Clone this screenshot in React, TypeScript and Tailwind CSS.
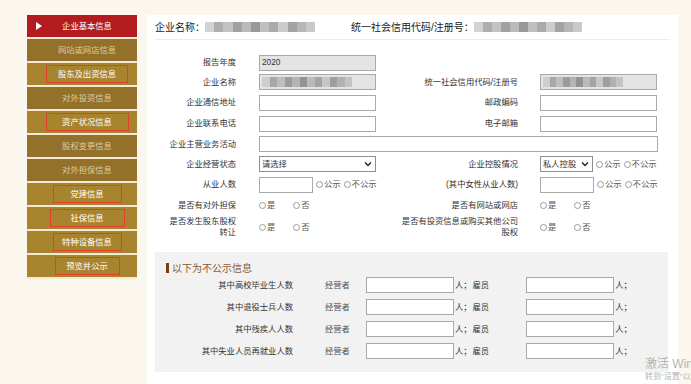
import React from "react";

const FONT = "font-['Liberation_Sans','Noto_Sans_CJK_SC',sans-serif]";

type NavItem = { label: string; kind: "red" | "dim" | "box"; boxW?: number };

const nav: NavItem[] = [
  { label: "企业基本信息", kind: "red" },
  { label: "网站或网店信息", kind: "dim" },
  { label: "股东及出资信息", kind: "box", boxW: 82 },
  { label: "对外投资信息", kind: "dim" },
  { label: "资产状况信息", kind: "box", boxW: 83 },
  { label: "股权变更信息", kind: "dim" },
  { label: "对外担保信息", kind: "dim" },
  { label: "党建信息", kind: "box", boxW: 69 },
  { label: "社保信息", kind: "box", boxW: 75 },
  { label: "特种设备信息", kind: "box", boxW: 69 },
  { label: "预览并公示", kind: "box", boxW: 65 },
];

function Sidebar() {
  return (
    <div className="w-[110px] flex flex-col shrink-0">
      {nav.map((n) => {
        const bg =
          n.kind === "red" ? "bg-[#b31c1f]" : n.kind === "dim" ? "bg-[#94712b]" : "bg-[#a9842f]";
        const txt = n.kind === "dim" ? "text-[#dccb9f]" : "text-white";
        return (
          <div
            key={n.label}
            className={`relative h-[24px] border-b-2 border-[#f3ead6] ${bg} flex items-center justify-center pl-[10px]`}
          >
            {n.kind === "red" && (
              <span className="absolute left-[9px] top-[7px] w-0 h-0 border-y-[4px] border-y-transparent border-l-[6px] border-l-white" />
            )}
            {n.kind === "box" ? (
              <span
                className={`h-[18px] flex items-center justify-center border border-[#e0402c] ${txt} text-[8.3px]`}
                style={{ width: n.boxW }}
              >
                {n.label}
              </span>
            ) : (
              <span className={`${txt} text-[8.3px]`}>{n.label}</span>
            )}
          </div>
        );
      })}
    </div>
  );
}

function Blur({ w }: { w: number }) {
  const shades = ["#c9c9c9", "#9a9a9a", "#b5b5b5", "#8a8a8a", "#a9a9a9", "#7f7f7f", "#b0b0b0", "#959595", "#c0c0c0", "#8d8d8d", "#a5a5a5", "#bcbcbc"];
  return (
    <span className="inline-flex h-[10px] overflow-hidden opacity-80" style={{ width: w }}>
      {shades.map((c, i) => (
        <span key={i} className="flex-1 h-full" style={{ background: c }} />
      ))}
    </span>
  );
}

function Radio({ label }: { label: string }) {
  return (
    <span className="inline-flex items-center">
      <span className="inline-block w-[7px] h-[7px] rounded-full border border-[#9a9a9a] bg-white mr-[1px]" />
      <span>{label}</span>
    </span>
  );
}

function Input({ w, gray, children }: { w: number; gray?: boolean; children?: React.ReactNode }) {
  return (
    <div
      className={`h-[16px] border border-[#a9a9a9] flex items-center px-[2px] ${gray ? "bg-[#e4e4e4]" : "bg-white"}`}
      style={{ width: w }}
    >
      {children}
    </div>
  );
}

function Select({ w, text }: { w: number; text: string }) {
  return (
    <div className="h-[16px] border border-[#8f8f8f] bg-white flex items-center justify-between px-[2px]" style={{ width: w }}>
      <span className="whitespace-nowrap">{text}</span>
      <svg width="8" height="6" viewBox="0 0 8 6" className="mr-[1px] shrink-0">
        <path d="M1 1.5 L4 4.5 L7 1.5" fill="none" stroke="#222" strokeWidth="1.4" />
      </svg>
    </div>
  );
}

function Row({
  h,
  l1,
  f1,
  l2,
  f2,
}: {
  h: number;
  l1: React.ReactNode;
  f1?: React.ReactNode;
  l2?: React.ReactNode;
  f2?: React.ReactNode;
}) {
  return (
    <div className="flex items-center" style={{ height: h }}>
      <div className="w-[81px] text-right leading-[11px] text-[#333]">{l1}</div>
      <div className="ml-[23px] w-[141px] flex items-center">{f1}</div>
      <div className="w-[118px] text-right leading-[11px] text-[#333]">{l2}</div>
      <div className="ml-[22px] flex items-center">{f2}</div>
    </div>
  );
}

function PubRadios() {
  return (
    <span className="flex items-center gap-[3px] ml-[3px] text-[#555]">
      <Radio label="公示" />
      <Radio label="不公示" />
    </span>
  );
}

function YesNo() {
  return (
    <span className="flex items-center gap-[18px] text-[#555]">
      <Radio label="是" />
      <Radio label="否" />
    </span>
  );
}

const hidden = ["其中高校毕业生人数", "其中退役士兵人数", "其中残疾人人数", "其中失业人员再就业人数"];

export default function App() {
  return (
    <div className={`relative w-[691px] h-[384px] overflow-hidden bg-[#fbf7ef] ${FONT} text-[8.3px] text-[#333]`}>
      <div className="flex pt-[15px] pl-[27px]">
        <Sidebar />
        <div className="ml-[10px] w-[531px] h-[369px] bg-white px-[8px]">
          <div className="h-[25px] flex items-center border-b border-[#ececec] text-[10px] text-[#222]">
            <span>企业名称：</span>
            <Blur w={110} />
            <span className="ml-[36px]">统一社会信用代码/注册号：</span>
            <Blur w={108} />
          </div>
          <div className="mt-[13px]">
            <Row h={19} l1="报告年度" f1={<Input w={117} gray>2020</Input>} />
            <Row
              h={20}
              l1="企业名称"
              f1={<Input w={117} gray><Blur w={90} /></Input>}
              l2="统一社会信用代码/注册号"
              f2={<Input w={117} gray><Blur w={80} /></Input>}
            />
            <Row h={21} l1="企业通信地址" f1={<Input w={117} />} l2="邮政编码" f2={<Input w={117} />} />
            <Row h={21} l1="企业联系电话" f1={<Input w={117} />} l2="电子邮箱" f2={<Input w={117} />} />
            <div className="flex items-center h-[20px]">
              <div className="w-[81px] text-right">企业主营业务活动</div>
              <div className="ml-[23px]">
                <Input w={399} />
              </div>
            </div>
            <Row
              h={20}
              l1="企业经营状态"
              f1={<Select w={117} text="请选择" />}
              l2="企业控股情况"
              f2={
                <>
                  <Select w={53} text="私人控股" />
                  <PubRadios />
                </>
              }
            />
            <Row
              h={21}
              l1="从业人数"
              f1={
                <>
                  <Input w={54} />
                  <PubRadios />
                </>
              }
              l2="(其中女性从业人数)"
              f2={
                <>
                  <Input w={54} />
                  <PubRadios />
                </>
              }
            />
            <Row h={21} l1="是否有对外担保" f1={<YesNo />} l2="是否有网站或网店" f2={<YesNo />} />
            <Row
              h={22}
              l1={
                <>
                  是否发生股东股权
                  <br />
                  转让
                </>
              }
              f1={<YesNo />}
              l2={
                <>
                  是否有投资信息或购买其他公司
                  <br />
                  股权
                </>
              }
              f2={<YesNo />}
            />
          </div>
          <div className="mt-[14px] w-[513px] h-[120px] bg-[#f2f2f2] pt-[10px]">
            <div className="h-[12px] flex items-center pl-[11px] text-[10px] text-[#8a5a2e]">
              <span className="inline-block w-[3px] h-[10px] bg-[#7a3a12] mr-[3px]" />
              以下为不公示信息
            </div>
            {hidden.map((t) => (
              <div key={t} className="h-[22px] flex items-center">
                <div className="w-[138px] text-right text-[#333]">{t}</div>
                <div className="ml-[32px] text-[#555]">经营者</div>
                <div className="ml-[16px]">
                  <Input w={88} />
                </div>
                <span className="ml-[1px]">人；</span>
                <span className="ml-[1px]">雇员</span>
                <div className="ml-[37px]">
                  <Input w={88} />
                </div>
                <span className="ml-[1px]">人；</span>
              </div>
            ))}
          </div>
        </div>
      </div>
      <div className="absolute left-[645px] top-[358px] text-[#b4b4b4] leading-none whitespace-nowrap">
        <div className="text-[12px]">激活 Windows</div>
        <div className="text-[8px] mt-[3px]">转到"设置"以激活 Windows。</div>
      </div>
    </div>
  );
}
